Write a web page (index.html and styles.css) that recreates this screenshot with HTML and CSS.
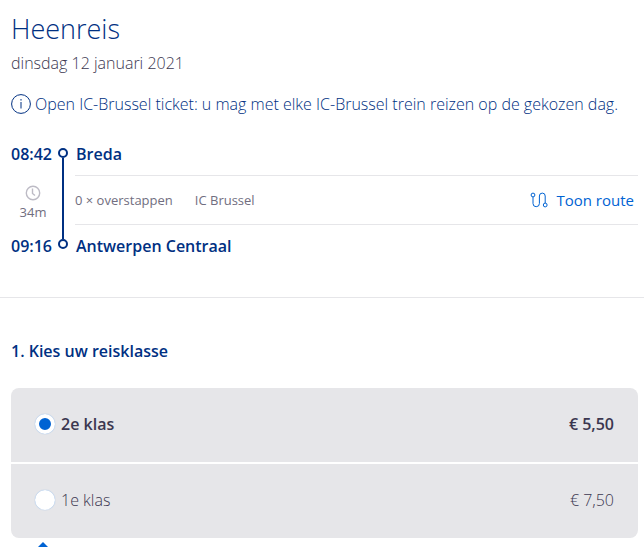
FILE: index.html
```html
<!DOCTYPE html>
<html lang="nl">
<head>
  <meta charset="UTF-8">
  <meta name="viewport" content="width=device-width, initial-scale=1.0">
  <title>Heenreis</title>
  <link rel="stylesheet" href="styles.css">
</head>
<body>

  <section class="trip">
    <h1>Heenreis</h1>
    <p class="date">dinsdag 12 januari 2021</p>

    <p class="notice">
      <svg class="icon-info" viewBox="0 0 20 20" aria-hidden="true">
        <circle cx="10" cy="10" r="9.4"/>
        <path d="M10 8v6.5M10 5v1.6"/>
      </svg>
      <span>Open IC-Brussel ticket: u mag met elke IC-Brussel trein reizen op de gekozen dag.</span>
    </p>

    <div class="journey">
      <div class="journey-times">
        <time>08:42</time>
        <div class="duration">
          <svg class="icon-clock" viewBox="0 0 16 16" aria-hidden="true">
            <circle cx="8" cy="8" r="6.7"/>
            <path d="M7.5 3.5v5l2.5 2"/>
          </svg>
          <span>34m</span>
        </div>
        <time>09:16</time>
      </div>
      <div class="rail">
        <span class="stop"></span>
        <span class="track"></span>
        <span class="stop"></span>
      </div>
      <div class="journey-info">
        <strong>Breda</strong>
        <div class="details">
          <span>0 × overstappen</span>
          <span>IC Brussel</span>
          <a href="#route" class="route-link">
            <svg class="icon-route" viewBox="0 0 18 16" aria-hidden="true">
              <circle cx="3" cy="3" r="1.9"/>
              <path d="M3 5v6.5a3.2 3.2 0 0 0 6.4 0V4a2.9 2.9 0 0 1 5.8 0v7.2"/>
              <circle cx="15.2" cy="13" r="1.9"/>
            </svg>
            <span>Toon route</span>
          </a>
        </div>
        <strong>Antwerpen Centraal</strong>
      </div>
    </div>
  </section>

  <section class="travel-class">
    <h2>1. Kies uw reisklasse</h2>
    <div class="options">
      <label class="option">
        <input type="radio" name="klasse" value="2" checked>
        <span>2e klas</span>
        <span class="price">€ 5,50</span>
      </label>
      <label class="option">
        <input type="radio" name="klasse" value="1">
        <span>1e klas</span>
        <span class="price">€ 7,50</span>
      </label>
    </div>
    <div class="pointer"></div>
  </section>

</body>
</html>
```

FILE: styles.css
```css
* {
  box-sizing: border-box;
}
body {
  margin: 0;
  background-color: #fff;
  color: #3b3750;
  font-family: "Open Sans", "Noto Sans", sans-serif;
  font-size: 16px;
  font-weight: 300;
  line-height: 22px;
}
h1, h2, p {
  margin: 0;
}
svg {
  flex: none;
  fill: none;
  stroke: currentColor;
}
.trip {
  padding: 10px 6px 40px 11px;
  border-bottom: 1px solid #e6e6e9;
}
h1 {
  color: #003082;
  font-size: 27px;
  font-weight: 300;
  line-height: 38px;
}
.date {
  padding-top: 4px;
}
.notice {
  display: flex;
  align-items: center;
  gap: 4px;
  padding-top: 19px;
  color: #003082;
}
.icon-info {
  width: 20px;
  height: 20px;
}

/* journey */
.journey {
  display: flex;
  padding-top: 28px;
}
.journey-times,
.journey-info {
  display: flex;
  flex-direction: column;
  gap: 10px;
}
.journey-times {
  width: 44px;
}
time,
strong {
  color: #003082;
  font-weight: 600;
}
.duration {
  display: flex;
  flex-direction: column;
  align-items: center;
  height: 50px;
  padding-top: 10px;
  color: #716e80;
  font-size: 13px;
  font-weight: 400;
}
.icon-clock {
  width: 16px;
  height: 16px;
  color: #bdbbc5;
  stroke-width: 1.4;
}
.rail {
  display: flex;
  flex-direction: column;
  align-items: center;
  width: 16px;
  padding: 5px 0 8px;
}
.stop {
  width: 10px;
  height: 10px;
  border: 2px solid #003082;
  border-radius: 50%;
}
.track {
  flex: 1;
  width: 2px;
  background-color: #003082;
}
.journey-info {
  flex: 1;
  padding-left: 4px;
}
.journey-info strong {
  padding-left: 1px;
}
.details {
  display: flex;
  align-items: center;
  gap: 22px;
  height: 50px;
  padding-right: 4px;
  border-top: 1px solid #e6e6e9;
  border-bottom: 1px solid #e6e6e9;
  color: #716e80;
  font-size: 13px;
  font-weight: 400;
}
.route-link {
  display: flex;
  align-items: center;
  gap: 8px;
  margin-left: auto;
  color: #0063d3;
  font-size: 15px;
  text-decoration: none;
}
.icon-route {
  width: 18px;
  height: 16px;
  stroke-width: 1;
}

/* class choice */
.travel-class {
  padding: 42px 6px 0 11px;
}
h2 {
  color: #003082;
  font-size: 16px;
  font-weight: 600;
  line-height: 22px;
}
.options {
  display: flex;
  flex-direction: column;
  gap: 2px;
  margin-top: 26px;
  border-radius: 8px;
  overflow: hidden;
}
.option {
  display: flex;
  align-items: center;
  gap: 6px;
  height: 74px;
  padding: 0 24px 2px;
  background-color: #e6e6e9;
  cursor: pointer;
}
.option:has(input:checked) {
  font-weight: 600;
}
.option input {
  appearance: none;
  width: 20px;
  height: 20px;
  margin: 0;
  border: 4px solid #fff;
  border-radius: 50%;
  background-color: #fff;
  box-shadow: 0 0 1px #66a1e5;
}
.option input:checked {
  background-color: #0063d3;
}
.price {
  margin-left: auto;
}
.pointer {
  width: 10px;
  height: 5px;
  margin: 4px 0 0 27px;
  background-color: #0063d3;
  clip-path: polygon(50% 0, 100% 100%, 0 100%);
}
```
